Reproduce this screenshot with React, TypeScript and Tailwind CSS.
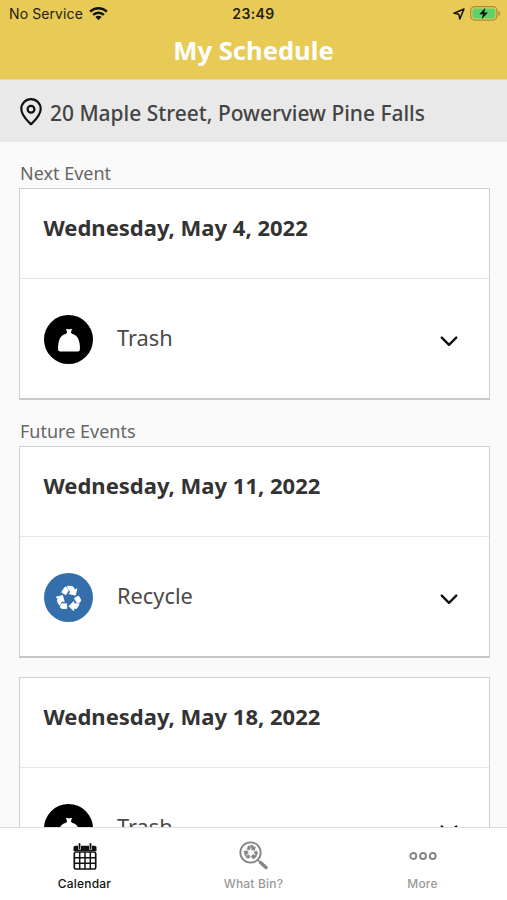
type EventKind = "trash" | "recycle";

interface PickupEvent {
  date: string;
  kind: EventKind;
}

const nextEvent: PickupEvent = { date: "Wednesday, May 4, 2022", kind: "trash" };

const futureEvents: PickupEvent[] = [
  { date: "Wednesday, May 11, 2022", kind: "recycle" },
  { date: "Wednesday, May 18, 2022", kind: "trash" },
];

function StatusBar() {
  return (
    <div className="grid h-[27px] grid-cols-3 items-center px-[9px] font-['Inter','Liberation_Sans',sans-serif] text-[14px] text-[#241f10]">
      <div className="flex items-center gap-[6px]">
        <span className="whitespace-nowrap tracking-[0.1px]">No Service</span>
        <svg width="19" height="15" viewBox="0 0 19 15" fill="none" stroke="#151208" strokeWidth="2.5">
          <path d="M1.1 5.6a12 12 0 0 1 16.8 0" />
          <path d="M4.1 8.8a7.8 7.8 0 0 1 10.8 0" />
          <path d="M9.5 14.2 6.4 11a4.4 4.4 0 0 1 6.2 0z" fill="#151208" stroke="none" />
        </svg>
      </div>
      <span className="text-center font-semibold tracking-[0.4px]">23:49</span>
      <div className="flex items-center justify-end gap-[5px]">
        <svg width="12" height="12" viewBox="0 0 12 12" fill="none" stroke="#151208" strokeWidth="1.5" strokeLinejoin="round">
          <path d="M11 1 1 5.2l4.8 1L6.8 11z" />
        </svg>
        <svg width="31" height="15" viewBox="0 0 31 15" className="-mr-[3px]">
          <rect x="0.7" y="0.7" width="26.2" height="13.4" rx="4" fill="none" stroke="#a98d3c" strokeWidth="1.2" />
          <rect x="2.4" y="2.4" width="22.8" height="10" rx="2.3" fill="#5bd36a" />
          <path d="M28.3 5v5c1.2-.4 1.9-1.3 1.9-2.5s-.7-2.1-1.9-2.5z" fill="#a98d3c" />
          <path d="M15.4 1.8 9.3 8.2h3.6l-1.2 5 6.3-6.6h-3.7z" fill="#111" />
        </svg>
      </div>
    </div>
  );
}

function TrashBagIcon() {
  return (
    <svg width="24" height="24" viewBox="0 0 24 24" fill="#fff">
      <path d="M8.9.8c1 .5 2 .4 3.1.4s2.1.1 3.1-.4L14 4c0 1.200.9 1.700 3 2.500 3 1.200 4.700 4.300 5.500 8.500.4 2.300.6 4.500.4 6.500-.1 1.200-.9 1.900-2.200 1.900H3.300c-1.300 0-2.100-.7-2.200-1.900-.2-2 0-4.200.4-6.500C2.300 10.800 4 7.700 7 6.500c2.100-.8 3-1.300 3-2.500z" />
    </svg>
  );
}

function RecycleIcon({ size, color, className }: { size: number; color: string; className?: string }) {
  return (
    <svg
      width={size}
      height={size}
      viewBox="0 0 24 24"
      fill={color}
      stroke={color}
      strokeWidth="0.8"
      strokeLinejoin="round"
      className={className}
    >
      <path d="M5.770 7.150 7.200 4.780l1.030-1.710c.39-.65 1.330-.65 1.720 0l1.480 2.460-1.230 2.060-1 1.620-3.430-2.060z" />
      <path d="m21.720 12.970-1.600-2.660-3.460 2L18.870 16H20a2 2 0 0 0 1.790-1.110c.14-.28.21-.58.21-.89 0-.36-.1-.71-.28-1.030z" />
      <path d="M16 21h1.500a2.010 2.010 0 0 0 1.800-1.110L20.740 17H16v-2l-4 4 4 4z" />
      <path d="M10 17H5.700l-.84 1.410c-.3.5-.32 1.120-.06 1.650.28.57.87.94 1.520.94H10z" />
      <path d="m6.120 14.350 1.730 1.040L6.480 9.900 1 11.270l1.700 1.020-.41.69c-.35.59-.38 1.310-.07 1.920l1.630 3.260z" />
      <path d="m17.020 5.140-1.300-2.170A1.990 1.990 0 0 0 14 2h-3.530l3.120 5.200-1.720 1.030 5.490 1.370 1.370-5.490z" />
    </svg>
  );
}

function EventRow({ kind }: { kind: EventKind }) {
  const isTrash = kind === "trash";
  return (
    <div className="flex h-[119px] items-center pt-[2px] pl-[24px] pr-[31px]">
      <div
        className={`flex size-[49px] items-center justify-center rounded-full ${isTrash ? "bg-black" : "bg-[#346fab]"}`}
      >
        {isTrash ? <TrashBagIcon /> : <RecycleIcon size={28} color="#fff" />}
      </div>
      <span className="ml-[24px] -mt-[2px] flex-1 text-[21.8px] text-[#4a4a4a]">
        {isTrash ? "Trash" : "Recycle"}
      </span>
      <svg
        width="18"
        height="11"
        viewBox="0 0 18 11"
        fill="none"
        stroke="#111"
        strokeWidth="2.4"
        strokeLinecap="round"
        strokeLinejoin="round"
        className="mt-[3px]"
      >
        <path d="m1.800 1.600 7.200 7.200 7.200-7.200" />
      </svg>
    </div>
  );
}

function EventCard({ event }: { event: PickupEvent }) {
  return (
    <section className="h-[212px] shrink-0 border border-b-2 border-[#d0d0d0] border-b-[#c8c8c8] bg-white">
      <h2 className="flex h-[90px] items-center border-b border-[#e6e6e6] pb-[13px] pl-[23.5px] text-[22px] font-bold text-[#333]">
        {event.date}
      </h2>
      <EventRow kind={event.kind} />
    </section>
  );
}

function CalendarIcon() {
  return (
    <svg width="24" height="27" viewBox="0 0 24 27" fill="none" stroke="#111">
      <path d="M.5 8V4.500C.5 3.500 1.300 2.700 2.500 2.700h19c1.200 0 2 .8 2 1.800V8z" fill="#111" stroke="none" />
      <path d="M6.500 3v2.500M17.500 3v2.500" stroke="#fff" strokeWidth="3" strokeLinecap="round" />
      <path d="M6.500 1v4.500M17.500 1v4.500" strokeWidth="1.800" strokeLinecap="round" />
      <rect x="1.3" y="9" width="21.4" height="17" rx="1.5" strokeWidth="1.7" />
      <path d="M6.700 9v17M12 9v17M17.300 9v17M1 14.700h22M1 20.300h22" strokeWidth="1.500" />
    </svg>
  );
}

function WhatBinIcon() {
  return (
    <div className="relative size-[29px]">
      <svg width="29" height="29" viewBox="0 0 29 29" fill="none" stroke="#858585">
        <circle cx="11.5" cy="11.5" r="10.2" strokeWidth="1.8" />
        <path d="m19 19 2.500 2.500" strokeWidth="1.500" />
        <path d="m21.500 21.500 5.500 5" strokeWidth="3.4" strokeLinecap="round" />
      </svg>
      <RecycleIcon size={16} color="#858585" className="absolute left-[3.5px] top-[3px]" />
    </div>
  );
}

function MoreIcon() {
  return (
    <svg width="28" height="10" viewBox="0 0 28 10" fill="none" stroke="#858585" strokeWidth="1.9">
      <circle cx="4.3" cy="5" r="3" />
      <circle cx="14" cy="5" r="3" />
      <circle cx="23.7" cy="5" r="3" />
    </svg>
  );
}

function TabBar() {
  return (
    <nav className="grid h-[73px] shrink-0 grid-cols-3 border-t border-[#dcdcdc] bg-white font-['Inter','Liberation_Sans',sans-serif] text-[12px] font-medium tracking-[0.2px]">
      <button className="flex flex-col items-center text-[#111]">
        <span className="flex h-[47px] items-center pt-[10px]">
          <CalendarIcon />
        </span>
        <span>Calendar</span>
      </button>
      <button className="flex flex-col items-center text-[#999]">
        <span className="flex h-[47px] items-center pt-[8px]">
          <WhatBinIcon />
        </span>
        <span>What Bin?</span>
      </button>
      <button className="flex flex-col items-center text-[#999]">
        <span className="flex h-[47px] items-center pt-[8px]">
          <MoreIcon />
        </span>
        <span>More</span>
      </button>
    </nav>
  );
}

export default function App() {
  return (
    <div className="flex h-[900px] w-[507px] flex-col overflow-hidden bg-[#fafafa] font-['Noto_Sans','Open_Sans',sans-serif]">
      <header className="h-[80px] shrink-0 border-b border-[#e6d9a8] bg-[#e8ca56]">
        <StatusBar />
        <h1 className="text-center text-[25.6px] leading-[47px] font-bold text-white">My Schedule</h1>
      </header>

      {/* Address */}
      <div className="flex h-[62px] shrink-0 items-center bg-[#e9e9e9] pt-[2px] pl-[20px]">
        <svg width="22" height="28" viewBox="0 0 22 28" fill="none" stroke="#111" strokeWidth="2.2">
          <path d="M11 26.300C9 24.300 1.300 17.500 1.300 10.900a9.700 9.700 0 0 1 19.400 0c0 6.600-7.700 13.400-9.700 15.400z" strokeLinejoin="round" />
          <circle cx="11" cy="11.3" r="3.4" />
        </svg>
        <span className="ml-[8px] pt-[4px] text-[20.95px] font-medium text-[#444]">20 Maple Street, Powerview Pine Falls</span>
      </div>

      <main className="min-h-0 flex-1 overflow-hidden pl-[19px] pr-[17px]">
        <h3 className="flex h-[46px] items-end pb-px pl-px text-[18px] text-[#666]">Next Event</h3>
        <EventCard event={nextEvent} />
        <h3 className="flex h-[46px] items-end pb-px pl-px text-[18px] text-[#666]">Future Events</h3>
        <div className="flex flex-col gap-[19px]">
          {futureEvents.map((event) => (
            <EventCard key={event.date} event={event} />
          ))}
        </div>
      </main>

      <TabBar />
    </div>
  );
}
